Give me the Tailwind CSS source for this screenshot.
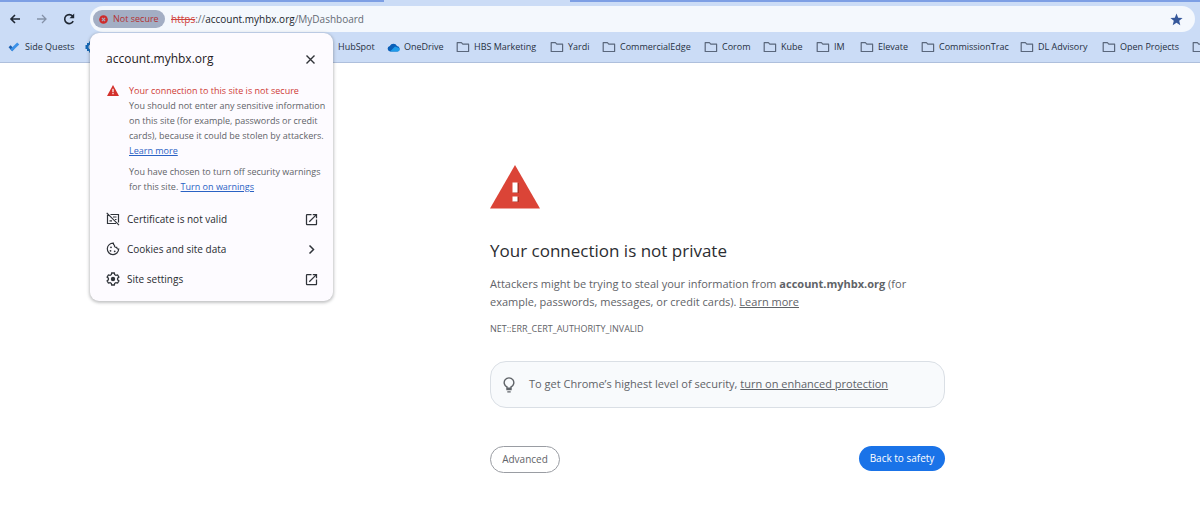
<!DOCTYPE html>
<html lang="en">
<head>
<meta charset="utf-8">
<title>Privacy error</title>
<script src="https://cdn.jsdelivr.net/npm/@tailwindcss/browser@4"></script>
</head>
<body class="relative min-h-screen overflow-x-hidden bg-white font-['Open_Sans','Noto_Sans',sans-serif] text-[#5f6368]">
<svg class="hidden" aria-hidden="true">
  <symbol id="folder" viewBox="0 0 14 12"><path d="M1.200 10.200V1.700h4.200l1.400 1.500h5.800v7.300H1.200z" fill="none" stroke="#5a677c" stroke-width="1.200" stroke-linejoin="round"/></symbol>
  <symbol id="launch" viewBox="0 0 24 24"><path fill="#30343a" d="M19 19H5V5h7V3H5a2 2 0 0 0-2 2v14a2 2 0 0 0 2 2h14c1.100 0 2-.9 2-2v-7h-2v7zM14 3v2h3.590l-9.830 9.830 1.410 1.410L19 6.410V10h2V3h-7z"/></symbol>
</svg>

<header class="border-b border-[#aebfdc] bg-[#cbdcf6]">
  <div class="flex h-[2px] bg-[#cbdcf6]" aria-hidden="true">
    <div class="w-[384px] bg-[#7d9fe4]"></div><div class="w-[186px]"></div><div class="flex-1 bg-[#7d9fe4]"></div>
  </div>
  <div class="flex items-center pt-1 pr-[5px] pl-2">
    <nav class="flex w-[82px] items-center gap-[13px]" aria-label="Navigation">
      <button aria-label="Back" class="size-[14px]"><svg viewBox="0 0 14 14"><path d="M12 7H3M7 3 3 7l4 4" fill="none" stroke="#1f2733" stroke-width="1.600"/></svg></button>
      <button aria-label="Forward" class="size-[14px]"><svg viewBox="0 0 14 14"><path d="M2 7h9M7 3l4 4-4 4" fill="none" stroke="#8592a8" stroke-width="1.300"/></svg></button>
      <button aria-label="Reload" class="size-[14px]"><svg viewBox="0 0 14 14"><path d="M11.200 9.200A4.500 4.500 0 1 1 10.600 4.100L11.500 5" fill="none" stroke="#1f2733" stroke-width="1.600"/><path d="M12.200 1.500v4.700H7.500z" fill="#1f2733"/></svg></button>
    </nav>
    <div class="flex h-[26px] flex-1 items-center rounded-full bg-[#f4f8fd] pr-3 pl-[3px]">
      <button class="flex h-[18px] w-[72px] items-center gap-[5px] rounded-full bg-[#a3aec4] pl-[6px] text-[9px] font-medium whitespace-nowrap text-[#b3302f]">
        <svg class="size-[9px] shrink-0" viewBox="0 0 10 10"><circle cx="5" cy="5" r="4.800" fill="#cf2b2b"/><path d="m3.200 3.200 3.600 3.600m0-3.600L3.200 6.800" stroke="#a3aec4" stroke-width="1.200"/></svg>Not secure</button>
      <p class="ml-[6px] flex-1 text-[10px] leading-4 text-[#646b75]"><span class="text-[#d0433b] line-through">https</span>://<span class="text-[#20242b]">account.myhbx.org</span>/MyDashboard</p>
      <button aria-label="Edit bookmark" class="size-[13px]"><svg viewBox="0 0 24 24"><path fill="#36589b" d="m12 1 3.100 7.600 8.200.6-6.300 5.300 2 8L12 18.200 5 22.500l2-8L.7 9.200l8.200-.6z"/></svg></button>
    </div>
  </div>
  <nav aria-label="Bookmarks" class="flex h-[30px] items-center overflow-hidden pl-2 text-[9px] font-medium whitespace-nowrap text-[#263042]">
    <a href="#" class="flex w-[77px] shrink-0 items-center gap-[5px]"><svg class="h-[10px] w-[12px]" viewBox="0 0 12 11"><path d="m0 5.800 2.200-2.200L6.300 7.600 4 10.200z" fill="#1b5fb0"/><path d="M4 10.200 1.900 8l7.600-7.500 2.300 2.200z" fill="#3b91e8"/></svg>Side Quests</a>
    <a href="#" aria-label="Settings bookmark" class="w-[253px] shrink-0"><svg class="size-[12px]" viewBox="0 0 12 12"><path d="M2 2h2V.5h4V2h2v8H8v1.500H4V10H2V8H.5V4H2z" fill="#1268b8"/><circle cx="6" cy="6" r="2.500" fill="#cbdcf6"/></svg></a>
    <a href="#" class="w-[49px] shrink-0">HubSpot</a>
    <a href="#" class="flex w-[69px] shrink-0 items-center gap-[4px]"><svg class="h-[9px] w-[13px]" viewBox="0 0 13 9"><path d="M3 8.500A2.800 2.800 0 0 1 2.800 3 4 4 0 0 1 10 3a2.800 2.800 0 0 1 .5 5.500z" fill="#0a5fb8"/><path d="M3 8.500h8a2 2 0 0 0 1-3.500L8 3.500z" fill="#1e9bea"/></svg>OneDrive</a>
    <a href="#" class="flex w-[94px] shrink-0 items-center gap-[4px]"><svg class="h-3 w-[14px]"><use href="#folder"/></svg>HBS Marketing</a>
    <a href="#" class="flex w-[52px] shrink-0 items-center gap-[4px]"><svg class="h-3 w-[14px]"><use href="#folder"/></svg>Yardi</a>
    <a href="#" class="flex w-[102px] shrink-0 items-center gap-[4px]"><svg class="h-3 w-[14px]"><use href="#folder"/></svg>CommercialEdge</a>
    <a href="#" class="flex w-[59px] shrink-0 items-center gap-[4px]"><svg class="h-3 w-[14px]"><use href="#folder"/></svg>Corom</a>
    <a href="#" class="flex w-[53px] shrink-0 items-center gap-[4px]"><svg class="h-3 w-[14px]"><use href="#folder"/></svg>Kube</a>
    <a href="#" class="flex w-[44px] shrink-0 items-center gap-[4px]"><svg class="h-3 w-[14px]"><use href="#folder"/></svg>IM</a>
    <a href="#" class="flex w-[61px] shrink-0 items-center gap-[4px]"><svg class="h-3 w-[14px]"><use href="#folder"/></svg>Elevate</a>
    <a href="#" class="flex w-[99px] shrink-0 items-center gap-[4px]"><svg class="h-3 w-[14px]"><use href="#folder"/></svg>CommissionTrac</a>
    <a href="#" class="flex w-[82px] shrink-0 items-center gap-[4px]"><svg class="h-3 w-[14px]"><use href="#folder"/></svg>DL Advisory</a>
    <a href="#" class="flex w-[90px] shrink-0 items-center gap-[4px]"><svg class="h-3 w-[14px]"><use href="#folder"/></svg>Open Projects</a>
    <a href="#" aria-label="More bookmarks" class="shrink-0"><svg class="h-3 w-[14px]"><use href="#folder"/></svg></a>
  </nav>
</header>

<main class="ml-[490px] w-full max-w-[455px] pt-[102px]">
  <svg class="h-[44px] w-[50px]" viewBox="0 0 50 44" role="img" aria-label="Warning"><path d="M25 0 50 43.500H0z" fill="#db4437"/><path d="M23 18h6v10h-6zM23 32h6v5h-6z" fill="#a93226"/><path d="M22.500 17.500h5v10h-5zM22.500 31.500h5v5h-5z" fill="#fff"/></svg>
  <h1 class="mt-[30px] text-[17px] leading-6 text-[#2b2d31]">Your connection is not private</h1>
  <p class="mt-[12px] text-[11px] leading-[18px]">Attackers might be trying to steal your information from <strong>account.myhbx.org</strong> (for example, passwords, messages, or credit cards). <a href="#" class="underline">Learn more</a></p>
  <p class="mt-[10px] text-[9px] leading-4">NET::ERR_CERT_AUTHORITY_INVALID</p>
  <div class="mt-[24px] flex h-[47px] items-center gap-[14px] rounded-[16px] border border-[#dadfe5] bg-[#f8fafc] px-3 text-[11px]">
    <svg class="h-4 w-3 shrink-0" viewBox="0 0 12 16"><path d="M4 11.200V10A4.800 4.800 0 1 1 8 10v1.200z" fill="none" stroke="#5f6368" stroke-width="1.400"/><path d="M3.300 12.500h5.400M4.300 14.800h3.400" stroke="#5f6368" stroke-width="1.300"/></svg>
    <p>To get Chrome’s highest level of security, <a href="#" class="underline">turn on enhanced protection</a></p>
  </div>
  <div class="mt-[38px] flex items-start justify-between text-[10px]">
    <button class="h-[27px] w-[70px] rounded-full border border-[#9a9da3]">Advanced</button>
    <button class="h-[25px] w-[86px] rounded-full bg-[#1a73e8] text-white">Back to safety</button>
  </div>
</main>

<section role="dialog" aria-label="Site information" class="absolute top-[33px] left-[90px] w-[243px] rounded-[9px] bg-[#fdfbff] pt-4 pr-[14px] pb-[7px] pl-4 shadow-[0_1px_3px_1px_rgba(60,64,67,0.300)]">
  <div class="flex items-center justify-between pr-[3px]">
    <h2 class="text-[12px] leading-5 font-medium text-[#1f2024]">account.myhbx.org</h2>
    <button aria-label="Close" class="size-[11px]"><svg viewBox="0 0 11 11"><path d="m1.500 1.500 8 8m0-8-8 8" stroke="#303338" stroke-width="1.400"/></svg></button>
  </div>
  <div class="mt-[14px] flex gap-[10px]">
    <svg class="mt-[2px] ml-[1px] h-[11px] w-3 shrink-0" viewBox="0 0 12 11"><path d="M6 0 12 11H0z" fill="#d3302b"/><path d="M6 3.800v3.400M6 8v1.300" stroke="#fff" stroke-width="1.200"/></svg>
    <div class="text-[9px] leading-[15px] whitespace-nowrap">
      <h3 class="font-medium text-[#cf3c36]">Your connection to this site is not secure</h3>
      <p>You should not enter any sensitive information<br>on this site (for example, passwords or credit<br>cards), because it could be stolen by attackers.<br><a href="#" class="text-[#2a62c4] underline">Learn more</a></p>
      <p class="mt-[6px]">You have chosen to turn off security warnings<br>for this site. <a href="#" class="text-[#2a62c4] underline">Turn on warnings</a></p>
    </div>
  </div>
  <ul class="mt-[10px] text-[10px] font-medium text-[#292b30]">
    <li><button class="flex h-[30px] w-full items-center gap-[7px]"><svg class="size-[14px]" viewBox="0 0 14 14"><path d="M4.500 2.500h8v8M10 11.500H1.500V2.800M7 5h3.500M3.500 8.800H6M9 7.500h1.500M.7.9l12.300 12.300" fill="none" stroke="#30343a" stroke-width="1.200"/></svg><span class="flex-1 text-left">Certificate is not valid</span><svg class="size-[15px]"><use href="#launch"/></svg></button></li>
    <li><button class="flex h-[30px] w-full items-center gap-[7px]"><svg class="size-[14px]" viewBox="0 0 14 14"><path d="M7.400 1.200A5.700 5.700 0 1 0 12.700 7c-1.300.2-2-.6-2-1.700-1.700.2-2.500-.6-2.200-2-.8-.3-1.200-1-1.100-2.100z" fill="none" stroke="#30343a" stroke-width="1.200"/><circle cx="5" cy="5.300" r=".9" fill="#30343a"/><circle cx="4.500" cy="8.800" r=".9" fill="#30343a"/><circle cx="8.700" cy="9.300" r=".9" fill="#30343a"/></svg><span class="flex-1 text-left">Cookies and site data</span><svg class="size-[15px]" viewBox="0 0 15 15"><path d="m5.500 3.500 4 4-4 4" fill="none" stroke="#30343a" stroke-width="1.500"/></svg></button></li>
    <li><button class="flex h-[30px] w-full items-center gap-[7px]"><svg class="size-[14px]" viewBox="0 0 14 14"><path d="M5.700 1h2.600l.4 1.700 1.200.7 1.700-.5 1.300 2.200-1.300 1.200v1.400l1.300 1.200-1.300 2.200-1.700-.5-1.200.7-.4 1.700H5.700l-.4-1.700-1.200-.7-1.700.5L1.100 8.900l1.300-1.200V6.300L1.100 5.100l1.300-2.200 1.700.5 1.200-.7z" fill="none" stroke="#30343a" stroke-width="1.300"/><circle cx="7" cy="7" r="2.200" fill="#30343a"/></svg><span class="flex-1 text-left">Site settings</span><svg class="size-[15px]"><use href="#launch"/></svg></button></li>
  </ul>
</section>
</body>
</html>
